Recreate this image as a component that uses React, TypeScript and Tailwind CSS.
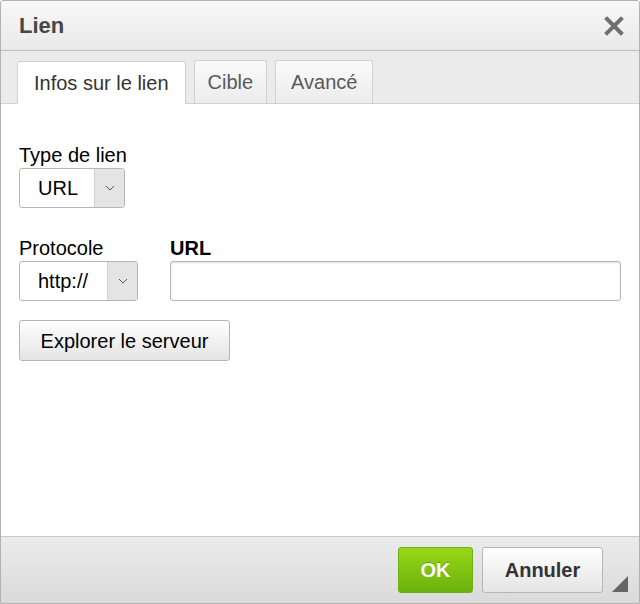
import React from 'react'

const font = { fontFamily: '"Liberation Sans", Arial, sans-serif' }

const Chevron = () => (
  <svg width="10" height="6" viewBox="0 0 10 6" fill="none" stroke="#555" strokeWidth="1">
    <path d="M1 1l4 4 4-4" />
  </svg>
)

const SelectBox: React.FC<{ value: string; width: string }> = ({ value, width }) => (
  <div className={`flex h-[40px] ${width} rounded-[3px] border border-[#b6b6b6] bg-white overflow-hidden`}>
    <div className="flex-1 flex items-center pl-[18px] text-[20px] text-black">{value}</div>
    <div className="w-[30px] flex items-center justify-center bg-[#e4e4e4] border-l border-[#d1d1d1]">
      <Chevron />
    </div>
  </div>
)

export default function App() {
  return (
    <div style={font} className="w-[640px] h-[604px] flex flex-col border border-[#b2b2b2] rounded-t-[3px] overflow-hidden bg-white">
      {/* title */}
      <div className="h-[50px] flex items-center justify-between pl-[18px] pr-[15px] bg-gradient-to-b from-[#f8f8f8] to-[#e9e9e9] border-b border-[#bfbfbf]">
        <span className="text-[22px] font-bold text-[#474747]">Lien</span>
        <svg width="20" height="20" viewBox="0 0 20 20" stroke="#707070" strokeWidth="4" strokeLinecap="square">
          <path d="M3 3l14 14M17 3L3 17" />
        </svg>
      </div>

      {/* tabs */}
      <div className="h-[53px] flex items-end gap-[8px] pl-[16px] bg-[#ebebeb] border-b border-[#d1d1d1]">
        <div className="h-[43px] -mb-px px-[16px] flex items-center bg-white border border-b-0 border-[#d1d1d1] rounded-t-[3px] text-[20px] text-[#333]">
          Infos sur le lien
        </div>
        <div className="h-[43px] px-[13px] flex items-center bg-gradient-to-b from-[#fafafa] to-[#ececec] border border-b-0 border-[#d1d1d1] rounded-t-[3px] text-[20px] text-[#595959]">
          Cible
        </div>
        <div className="h-[43px] px-[15px] flex items-center bg-gradient-to-b from-[#fafafa] to-[#ececec] border border-b-0 border-[#d1d1d1] rounded-t-[3px] text-[20px] text-[#595959]">
          Avancé
        </div>
      </div>

      {/* body */}
      <div className="flex-1 px-[18px] pt-[40px] text-black">
        <div className="text-[20px] leading-[23px]">Type de lien</div>
        <div className="mt-[1px]">
          <SelectBox value="URL" width="w-[106px]" />
        </div>

        <div className="mt-[29px] flex gap-[32px]">
          <div>
            <div className="text-[20px] leading-[23px]">Protocole</div>
            <div className="mt-[1px]">
              <SelectBox value="http://" width="w-[119px]" />
            </div>
          </div>
          <div className="flex-1">
            <div className="text-[20px] leading-[23px] font-bold">URL</div>
            <div className="mt-[1px] h-[40px] rounded-[3px] border border-[#b6b6b6] bg-white shadow-[inset_0_1px_2px_rgba(0,0,0,0.12)]"></div>
          </div>
        </div>

        <button className="mt-[19px] h-[41px] w-[211px] rounded-[3px] border border-[#b6b6b6] bg-gradient-to-b from-white to-[#e4e4e4] text-[20px] text-black">
          Explorer le serveur
        </button>
      </div>

      {/* footer */}
      <div className="h-[67px] relative flex items-center justify-end gap-[9px] pr-[36px] bg-gradient-to-b from-[#ebebeb] to-[#dadada] border-t border-[#c8c8c8]">
        <button className="h-[46px] w-[75px] rounded-[3px] border border-[#6ab01a] bg-gradient-to-b from-[#9ad717] to-[#69b10b] text-[20px] font-bold text-white [text-shadow:0_-1px_0_rgba(0,0,0,0.25)]">
          OK
        </button>
        <button className="h-[46px] w-[121px] rounded-[3px] border border-[#b6b6b6] bg-gradient-to-b from-white to-[#e4e4e4] text-[20px] font-bold text-[#333]">
          Annuler
        </button>
        <svg className="absolute right-[11px] bottom-[11px]" width="16" height="16" viewBox="0 0 16 16">
          <path d="M16 0L16 16L0 16Z" fill="#666" />
        </svg>
      </div>
    </div>
  )
}
